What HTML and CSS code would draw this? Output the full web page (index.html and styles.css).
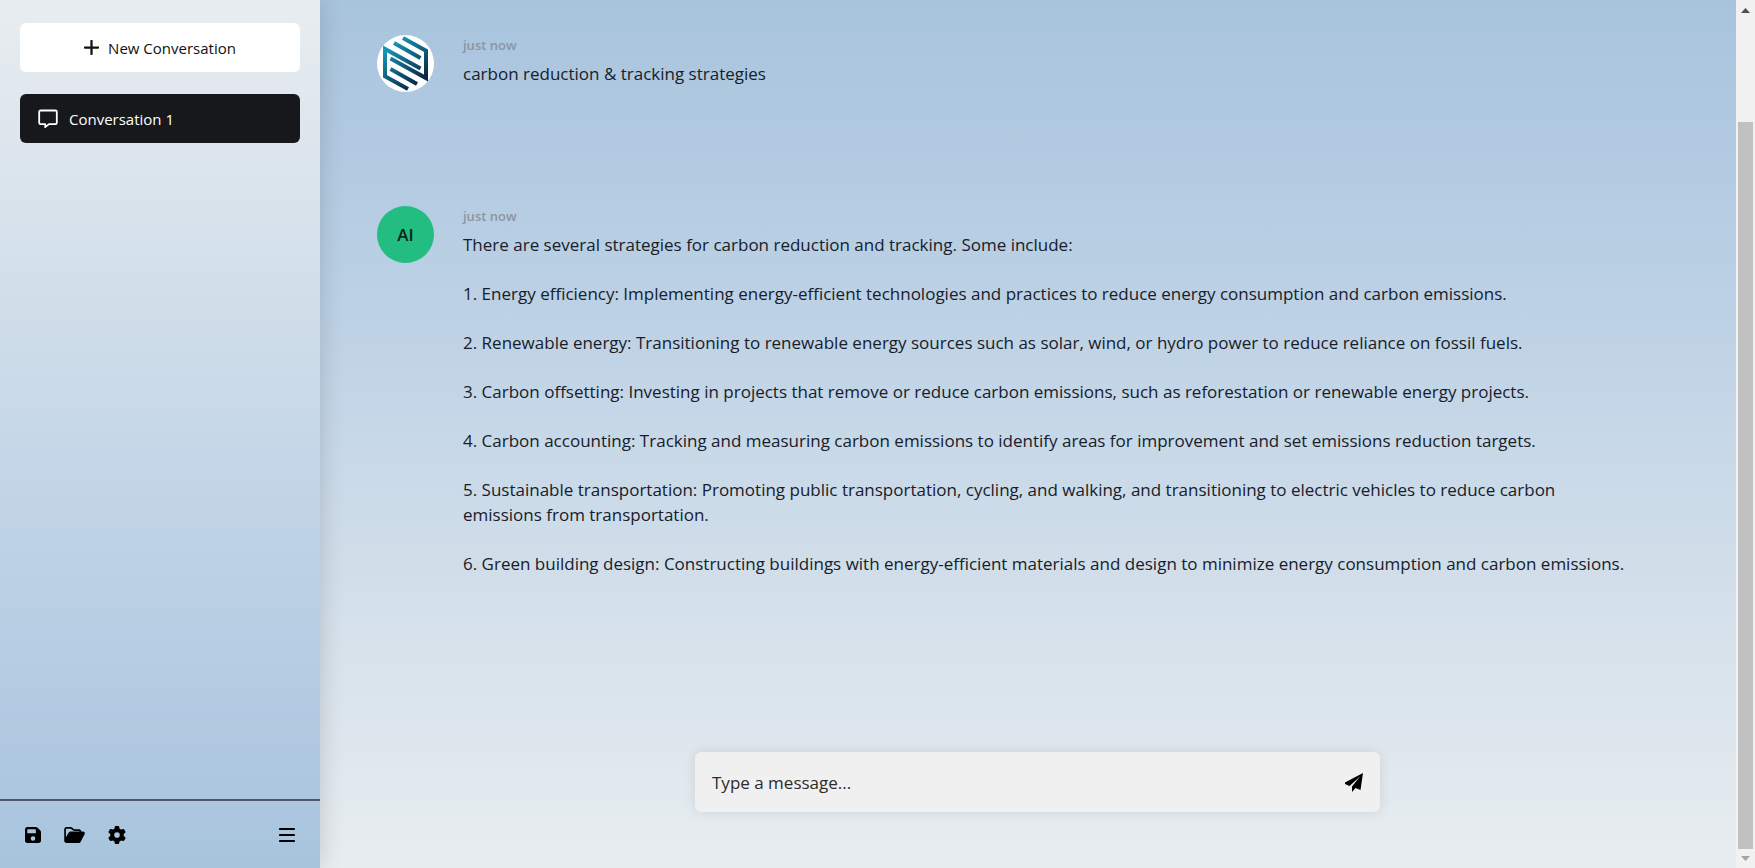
FILE: index.html
```html
<!DOCTYPE html>
<html lang="en">
<head>
<meta charset="utf-8">
<title>Conversation 1</title>
<link rel="stylesheet" href="styles.css">
</head>
<body>
<aside class="sidebar">
  <div class="sidebar-list">
    <button class="new-btn" type="button">
      <svg class="icon-plus" viewBox="0 0 16 16" aria-hidden="true"><path d="M8 1v14M1 8h14" stroke="currentColor" stroke-width="2.400" stroke-linecap="round"/></svg>
      New Conversation
    </button>
    <button class="conv-btn" type="button">
      <svg class="icon-chat" viewBox="0 0 20 20" fill="none" aria-hidden="true"><path d="M2.500 1.500h15a1.300 1.300 0 0 1 1.300 1.300v11a1.300 1.300 0 0 1-1.300 1.300H11l-3.800 3v-3H2.500a1.300 1.300 0 0 1-1.300-1.300v-11a1.300 1.300 0 0 1 1.300-1.300z" stroke="currentColor" stroke-width="1.800" stroke-linejoin="round"/></svg>
      Conversation 1
    </button>
  </div>
  <div class="toolbar">
    <button class="tool" type="button" aria-label="Save">
      <svg class="icon-save" viewBox="0 0 448 448" aria-hidden="true"><path fill="currentColor" fill-rule="evenodd" d="M64 0C29 0 0 29 0 64v320c0 35 29 64 64 64h320c35 0 64-29 64-64V142c0-17-7-34-19-46l-77-77C340 7 323 0 306 0zM64 80c0-9 7-16 16-16h208c9 0 16 7 16 16v80c0 9-7 16-16 16H80c-9 0-16-7-16-16zm160 176a64 64 0 1 1 0 128 64 64 0 1 1 0-128z"/></svg>
    </button>
    <button class="tool" type="button" aria-label="Open">
      <svg class="icon-folder" viewBox="0 0 576 448" aria-hidden="true"><path fill="currentColor" d="M384 448H88c-36 0-88-12-88-64V64C0 29 29 0 64 0h118c17 0 33 7 45 19l26 26c12 12 28 19 45 19h118c35 0 64 29 64 64v32h-48v-32c0-9-7-16-16-16H298c-29 0-58-12-79-33l-26-26c-3-3-7-5-11-5H64c-9 0-16 7-16 16v226l65-113c17-30 49-48 83-48h332c37 0 60 40 41 72L457 417c-11 19-32 31-54 31z"/></svg>
    </button>
    <button class="tool" type="button" aria-label="Settings">
      <svg class="icon-gear" viewBox="0 0 512 512" aria-hidden="true"><path fill="currentColor" d="M496 167c3 9 0 18-6 25l-44 39a197 197 0 0 1 0 50l44 39c6 7 9 16 6 25-4 12-10 24-16 35l-5 8c-6 11-14 22-22 32-6 7-16 10-24 7l-56-18c-13 10-28 19-43 25l-13 57c-2 9-9 16-18 18a266 266 0 0 1-87 0c-9-2-16-9-18-18l-13-57c-15-6-30-15-43-25l-56 18c-8 3-18 0-24-7-8-10-16-21-22-32l-5-8c-6-11-12-23-16-35-3-9 0-18 6-25l44-39a197 197 0 0 1 0-50l-44-39c-6-7-9-16-6-25 4-12 10-24 16-35l5-8c6-11 14-22 22-32 6-7 16-10 24-7l56 18c13-10 28-19 43-25l13-57c2-9 9-16 18-18a266 266 0 0 1 87 0c9 2 16 9 18 18l13 57c15 6 30 15 43 25l56-18c8-3 18 0 24 7 8 10 16 21 22 32l5 8c6 11 12 23 16 35zM256 336a80 80 0 1 0 0-160 80 80 0 1 0 0 160z"/></svg>
    </button>
    <button class="tool tool-menu" type="button" aria-label="Menu">
      <svg class="icon-menu" viewBox="0 0 16 16" aria-hidden="true"><path d="M1 2h14M1 8h14M1 14h14" stroke="currentColor" stroke-width="2.200" stroke-linecap="round"/></svg>
    </button>
  </div>
</aside>
<main class="chat">
  <div class="messages">
    <article class="message">
      <div class="avatar avatar-user">
        <svg class="logo" viewBox="0 0 57 57" aria-hidden="true">
          <defs><linearGradient id="brand" gradientUnits="userSpaceOnUse" x1="8" y1="8" x2="42" y2="50"><stop offset="0" stop-color="#12a5c6"/><stop offset=".45" stop-color="#15688a"/><stop offset="1" stop-color="#082440"/></linearGradient></defs>
          <g fill="none" stroke="url(#brand)" stroke-width="4">
            <path d="M26 3L49 15.700V43L13.500 23.500"/>
            <path d="M31 54L8 41.300V14L43.500 33.500"/>
            <path d="M17 8L43.500 23"/>
            <path d="M13.500 34L40 49"/>
          </g>
        </svg>
      </div>
      <div class="body">
        <time class="time">just now</time>
        <div class="text"><p>carbon reduction &amp; tracking strategies</p></div>
      </div>
    </article>
    <article class="message">
      <div class="avatar avatar-ai">AI</div>
      <div class="body">
        <time class="time">just now</time>
        <div class="text">
          <p>There are several strategies for carbon reduction and tracking. Some include:</p>
          <p>1. Energy efficiency: Implementing energy-efficient technologies and practices to reduce energy consumption and carbon emissions.</p>
          <p>2. Renewable energy: Transitioning to renewable energy sources such as solar, wind, or hydro power to reduce reliance on fossil fuels.</p>
          <p>3. Carbon offsetting: Investing in projects that remove or reduce carbon emissions, such as reforestation or renewable energy projects.</p>
          <p>4. Carbon accounting: Tracking and measuring carbon emissions to identify areas for improvement and set emissions reduction targets.</p>
          <p>5. Sustainable transportation: Promoting public transportation, cycling, and walking, and transitioning to electric vehicles to reduce carbon emissions from transportation.</p>
          <p>6. Green building design: Constructing buildings with energy-efficient materials and design to minimize energy consumption and carbon emissions.</p>
        </div>
      </div>
    </article>
  </div>
  <div class="scrollbar" aria-hidden="true">
    <svg class="arrow" viewBox="0 0 9 5"><path d="M0 5L4.500 0L9 5z" fill="#505050"/></svg>
    <div class="track"><div class="thumb"></div></div>
    <svg class="arrow" viewBox="0 0 9 5"><path d="M0 0L4.500 5L9 0z" fill="#a3a3a3"/></svg>
  </div>
  <form class="composer">
    <input class="composer-input" type="text" placeholder="Type a message..." aria-label="Message">
    <button class="send" type="button" aria-label="Send">
      <svg class="icon-send" viewBox="0 0 18 19" aria-hidden="true"><path fill="currentColor" d="M18 0L0 9.500v1.500l4.500 2L15 3.500L7 13.500V19l3.500-4L15.500 17z"/></svg>
    </button>
  </form>
</main>
</body>
</html>
```
FILE: styles.css
```css
* { box-sizing: border-box; }
body {
  margin: 0;
  height: 100vh;
  display: flex;
  overflow: hidden;
  font-family: "Segoe UI", "Open Sans", "Noto Sans", sans-serif;
  font-size: 17px;
  color: #17202a;
}
button { font: inherit; border: 0; background: none; padding: 0; color: inherit; cursor: pointer; }
svg { display: block; }
p { margin: 0; }

.sidebar {
  position: relative;
  z-index: 1;
  flex: 0 0 320px;
  display: flex;
  flex-direction: column;
  background: linear-gradient(#e8edf0, #b9cfe4 70%, #a8c4dd);
  box-shadow: 0 0 24px rgba(0, 0, 0, 0.16);
}
.sidebar-list {
  flex: 1;
  display: flex;
  flex-direction: column;
  gap: 22px;
  padding: 23px 20px;
}
.new-btn, .conv-btn {
  height: 49px;
  display: flex;
  align-items: center;
  border-radius: 6px;
  font-size: 15px;
}
.new-btn { justify-content: center; gap: 9px; background: #fff; color: #111; }
.conv-btn { gap: 11px; padding: 0 18px; background: #17181c; color: #fff; }
.icon-plus { width: 15px; height: 15px; }
.icon-chat { width: 20px; height: 20px; }

.toolbar {
  height: 69px;
  display: flex;
  align-items: center;
  gap: 23px;
  padding: 0 25px;
  border-top: 2px solid #4c5a6c;
  color: #000;
}
.tool-menu { margin-left: auto; }
.icon-save { width: 16px; height: 16px; }
.icon-folder { width: 21px; height: 16px; }
.icon-gear { width: 18px; height: 18px; }
.icon-menu { width: 16px; height: 16px; }

.chat {
  position: relative;
  flex: 1;
  min-width: 0;
  display: flex;
}
.messages {
  flex: 1;
  min-width: 0;
  padding: 35px 105px 0 57px;
  display: flex;
  flex-direction: column;
  gap: 114px;
  background: linear-gradient(#a8c4dd, #b9cfe4 30%, #e8edf0);
}
.message { display: flex; gap: 29px; }
.avatar {
  flex: none;
  width: 57px;
  height: 57px;
  border-radius: 50%;
  display: flex;
  align-items: center;
  justify-content: center;
}
.avatar-user { background: #fff; }
.avatar-ai { background: #23bd81; color: #06251a; font-weight: 600; }
.logo { width: 57px; height: 57px; }
.body { flex: 1; min-width: 0; }
.time {
  display: block;
  font-size: 13px;
  line-height: 20px;
  font-weight: 600;
  color: #8b959f;
}
.text {
  display: flex;
  flex-direction: column;
  gap: 24px;
  padding-top: 6px;
  line-height: 25px;
}

.scrollbar {
  flex: 0 0 19px;
  display: flex;
  flex-direction: column;
  align-items: center;
  justify-content: space-between;
  padding: 8px 2px 7px;
  background: #f1f1f1;
}
.arrow { width: 9px; height: 5px; }
.track { flex: 1; align-self: stretch; padding: 109px 0 7px; }
.thumb { height: 100%; background: #c1c1c1; }

.composer {
  position: absolute;
  left: 0;
  right: 0;
  bottom: 56px;
  margin: 0 auto;
  width: 90%;
  max-width: 685px;
  height: 60px;
  display: flex;
  align-items: center;
  padding: 0 17px;
  border-radius: 6px;
  background: #f0f0f0;
  box-shadow: 0 0 12px rgba(0, 0, 0, 0.1);
}
.composer-input {
  flex: 1;
  min-width: 0;
  padding: 0;
  border: 0;
  outline: 0;
  background: none;
  font: inherit;
}
.composer-input::placeholder { color: #2b2b2b; opacity: 1; }
.send { color: #000; }
.icon-send { width: 18px; height: 19px; }
```
